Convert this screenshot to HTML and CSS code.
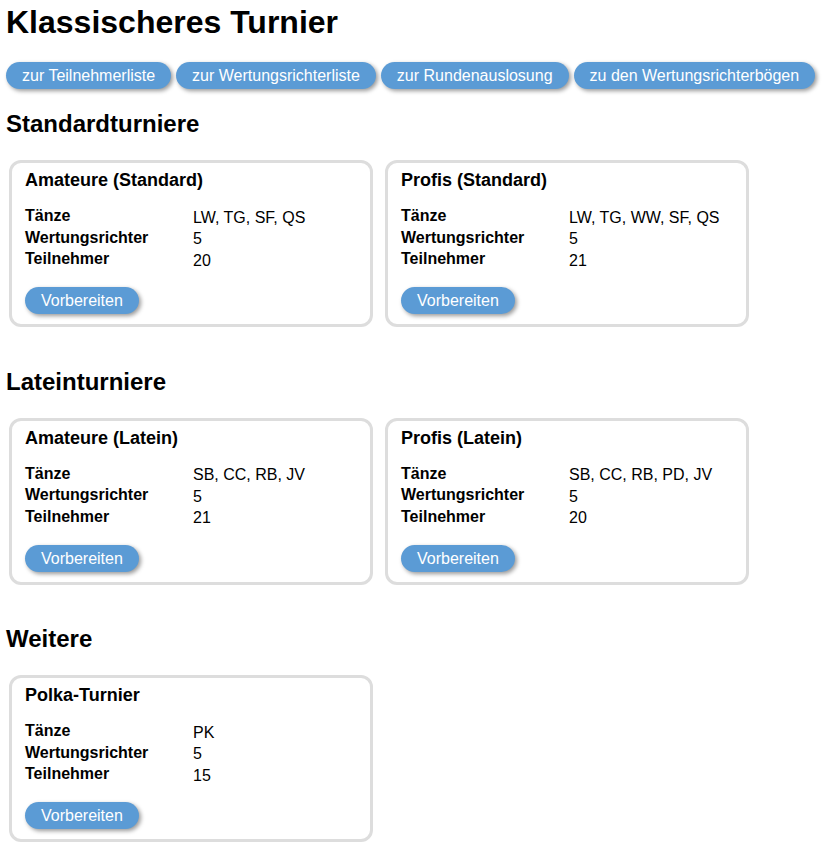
FILE: index.html
```html
<!DOCTYPE html>
<html lang="de">
<head>
  <meta charset="UTF-8" />
  <meta name="viewport" content="width=device-width, initial-scale=1.0"/>
  <title>Klassischeres Turnier</title>
  <link rel="stylesheet" href="styles.css">
</head>
<body>
  <h1>Klassischeres Turnier</h1>
  <nav class="nav">
    <button class="pill">zur Teilnehmerliste</button>
    <button class="pill">zur Wertungsrichterliste</button>
    <button class="pill">zur Rundenauslosung</button>
    <button class="pill">zu den Wertungsrichterbögen</button>
  </nav>

  <section>
    <h2>Standardturniere</h2>
    <div class="cards">
      <div class="card">
        <h3>Amateure (Standard)</h3>
        <dl class="facts">
          <dt>Tänze</dt><dd>LW, TG, SF, QS</dd>
          <dt>Wertungsrichter</dt><dd>5</dd>
          <dt>Teilnehmer</dt><dd>20</dd>
        </dl>
        <button class="pill">Vorbereiten</button>
      </div>
      <div class="card">
        <h3>Profis (Standard)</h3>
        <dl class="facts">
          <dt>Tänze</dt><dd>LW, TG, WW, SF, QS</dd>
          <dt>Wertungsrichter</dt><dd>5</dd>
          <dt>Teilnehmer</dt><dd>21</dd>
        </dl>
        <button class="pill">Vorbereiten</button>
      </div>
    </div>
  </section>

  <section>
    <h2>Lateinturniere</h2>
    <div class="cards">
      <div class="card">
        <h3>Amateure (Latein)</h3>
        <dl class="facts">
          <dt>Tänze</dt><dd>SB, CC, RB, JV</dd>
          <dt>Wertungsrichter</dt><dd>5</dd>
          <dt>Teilnehmer</dt><dd>21</dd>
        </dl>
        <button class="pill">Vorbereiten</button>
      </div>
      <div class="card">
        <h3>Profis (Latein)</h3>
        <dl class="facts">
          <dt>Tänze</dt><dd>SB, CC, RB, PD, JV</dd>
          <dt>Wertungsrichter</dt><dd>5</dd>
          <dt>Teilnehmer</dt><dd>20</dd>
        </dl>
        <button class="pill">Vorbereiten</button>
      </div>
    </div>
  </section>

  <section>
    <h2>Weitere</h2>
    <div class="cards">
      <div class="card">
        <h3>Polka-Turnier</h3>
        <dl class="facts">
          <dt>Tänze</dt><dd>PK</dd>
          <dt>Wertungsrichter</dt><dd>5</dd>
          <dt>Teilnehmer</dt><dd>15</dd>
        </dl>
        <button class="pill">Vorbereiten</button>
      </div>
    </div>
  </section>
</body>
</html>
```

FILE: styles.css
```css
body {
  font-family: "Liberation Sans", Arial, sans-serif;
  margin: 0;
  padding: 4px 6px;
  color: #000;
  background-color: #fff;
}
h1 {
  font-size: 32px;
  margin: 0 0 21px;
}
h2 {
  font-size: 24px;
  margin: 0 0 22px;
}
h3 {
  font-size: 18px;
  margin: 0 0 16px;
}
.nav {
  display: flex;
  gap: 5px;
  margin-bottom: 21px;
}
.pill {
  font-family: inherit;
  font-size: 16px;
  line-height: 19px;
  background-color: #5b9bd5;
  color: #fff;
  border: none;
  border-radius: 14px;
  padding: 4px 16px;
  box-shadow: 2px 2px 4px rgba(0, 0, 0, 0.4);
  cursor: pointer;
}
section + section { margin-top: 40.5px; }
.cards {
  display: flex;
  gap: 12px;
  margin-left: 3px;
}
.card {
  box-sizing: border-box;
  width: 364px;
  border: 3px solid #ddd;
  border-radius: 12px;
  padding: 7px 12px 10px 13px;
}
.facts {
  display: grid;
  grid-template-columns: 168px 1fr;
  grid-auto-rows: 21.5px;
  margin: 0 0 15.5px;
  font-size: 16px;
}
.facts dt {
  font-weight: bold;
}
.facts dd {
  margin: 0;
  padding-top: 1.5px;
}
```
